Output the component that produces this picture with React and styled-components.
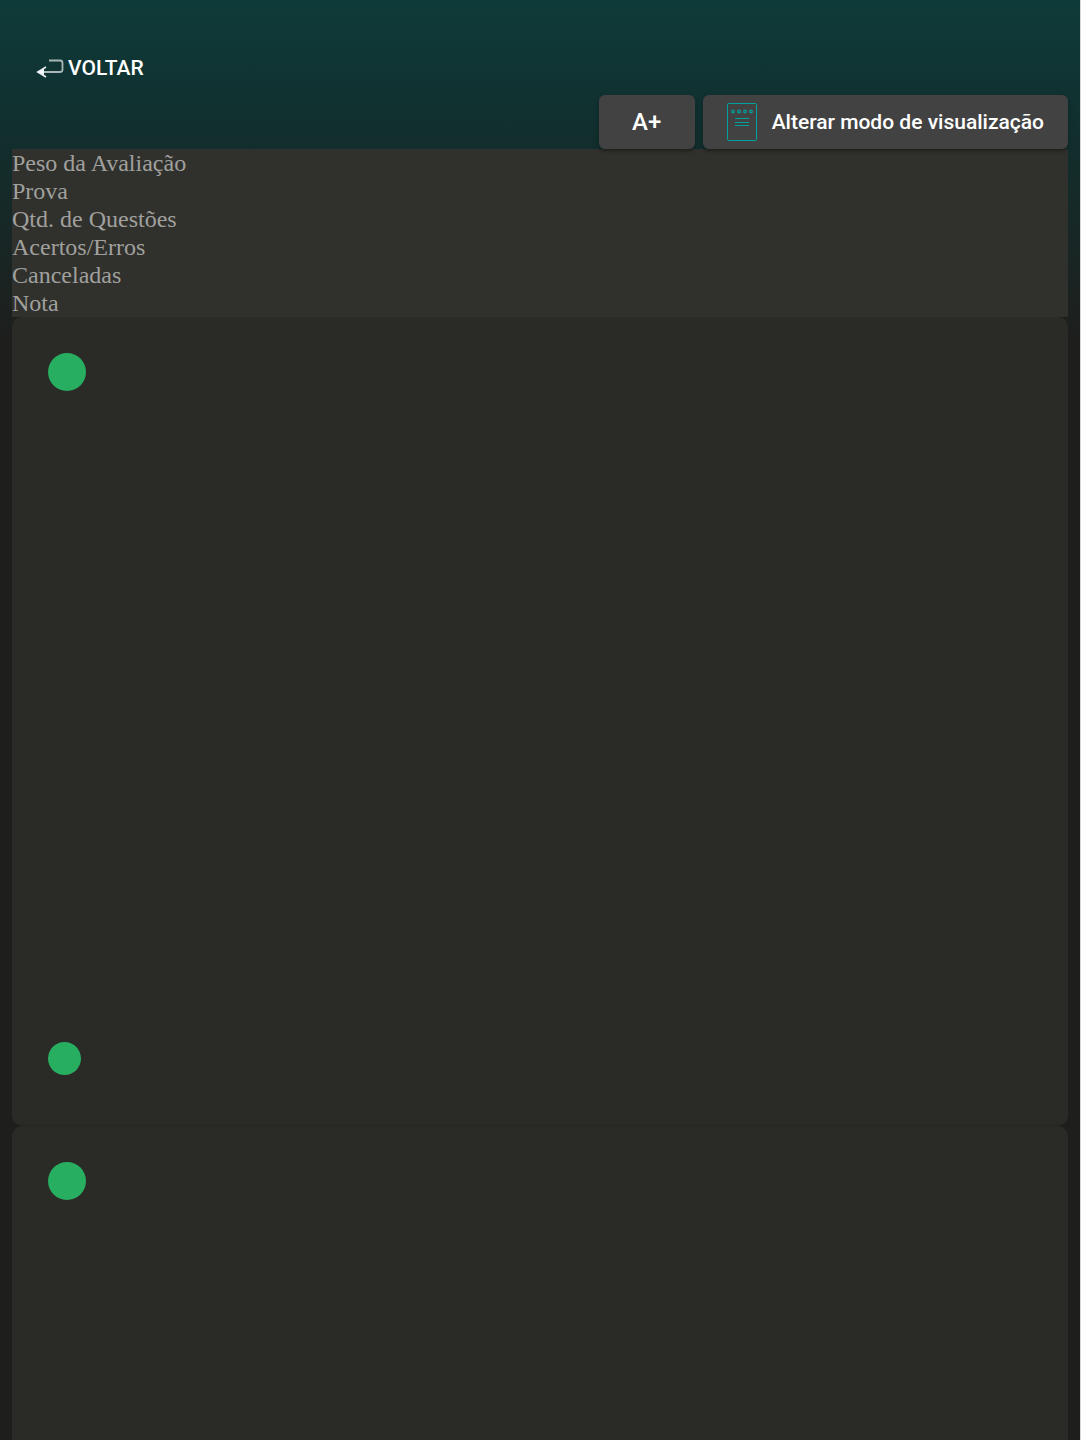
import React from "react";
import styled, { createGlobalStyle } from "styled-components";

const summaryFields = [
  "Peso da Avaliação",
  "Prova",
  "Qtd. de Questões",
  "Acertos/Erros",
  "Canceladas",
  "Nota",
];

const BackIcon = () => (
  <svg width="28" height="20" viewBox="0 0 28 20" fill="none" aria-hidden="true">
    <path d="M13 2.5H24Q26.5 2.5 26.5 5V11.5Q26.5 14 24 14H4" stroke="#a9b8b7" strokeWidth="1.8" />
    <path d="M10 9L2 14L10 19" stroke="#e4eaea" strokeWidth="1.8" />
    <path d="M1 14L8 11V17Z" fill="#f4f7f7" />
  </svg>
);

const NotepadIcon = () => (
  <svg width="30" height="38" viewBox="0 0 30 38" fill="none" stroke="#00a09d" aria-hidden="true">
    <rect x="0.5" y="0.5" width="29" height="37" rx="1" />
    {[6, 12, 18, 24].map((x) => (
      <circle key={x} cx={x} cy="8.5" r="1.3" strokeWidth="1.2" />
    ))}
    <path d="M8 15.5H22M8 19.5H22M8 22.5H22" />
  </svg>
);

const Question = ({ last = false }) => (
  <QuestionCard $last={last}>
    <Dot $size={38} />
    {!last && (
      <>
        <QuestionBody />
        <Dot $size={33} />
      </>
    )}
  </QuestionCard>
);

const App = () => {
  const [largeText, setLargeText] = React.useState(false);
  const [single, setSingle] = React.useState(false);

  return (
    <Page>
      <GlobalStyle />
      <Header>
        <BackLink href="#voltar">
          <BackIcon />
          VOLTAR
        </BackLink>
      </Header>
      <Toolbar>
        <ZoomButton type="button" onClick={() => setLargeText(!largeText)}>
          A+
        </ZoomButton>
        <ModeButton type="button" onClick={() => setSingle(!single)}>
          <NotepadIcon />
          Alterar modo de visualização
        </ModeButton>
      </Toolbar>
      <Summary $large={largeText}>
        {summaryFields.map((field) => (
          <li key={field}>{field}</li>
        ))}
      </Summary>
      {!single && <Question />}
      <Question last />
    </Page>
  );
};

const GlobalStyle = createGlobalStyle`
  * {
    box-sizing: border-box;
  }

  body {
    margin: 0;
    background: #1e1e1c;
  }
`;

const Page = styled.main`
  display: flex;
  flex-direction: column;
  min-height: 100vh;
  padding: 0 12px;
  border-right: 1px solid #d5d8d6;
  background: #1e1e1c linear-gradient(#0e3b39, #112f2e 130px, #1e1e1c 350px) no-repeat;
`;

const Header = styled.header`
  display: flex;
  padding: 55px 24px 14px;
`;

const BackLink = styled.a`
  display: flex;
  align-items: center;
  gap: 4px;
  color: #fff;
  font: 500 21px/26px Roboto, sans-serif;
  text-decoration: none;
`;

/* positioned so the button shadows fall over the summary */
const Toolbar = styled.div`
  position: relative;
  display: flex;
  justify-content: flex-end;
  gap: 8px;
`;

const Button = styled.button`
  display: flex;
  align-items: center;
  justify-content: center;
  height: 54px;
  border: 0;
  border-radius: 6px;
  background: #424242;
  color: #fff;
  cursor: pointer;
  box-shadow: 0 4px 2px -3px rgba(0, 0, 0, 0.2), 0 3px 3px rgba(0, 0, 0, 0.14),
    0 1px 7px rgba(0, 0, 0, 0.12);
`;

const ZoomButton = styled(Button)`
  min-width: 96px;
  font: 500 24px/54px Roboto, sans-serif;
`;

const ModeButton = styled(Button)`
  gap: 15px;
  padding: 0 24px;
  font: 500 21px/54px Roboto, sans-serif;
`;

const Summary = styled.ul`
  margin: 0;
  padding: 0;
  list-style: none;
  background: #30302c;
  color: #a0a09e;
  font-family: "Liberation Serif", serif;
  font-size: ${({ $large }) => ($large ? 28 : 24)}px;
  line-height: 28px;
`;

const QuestionCard = styled.section`
  display: flex;
  flex-direction: column;
  flex: ${({ $last }) => ($last ? "1 0 auto" : "none")};
  padding: ${({ $last }) => ($last ? "36px 36px 0" : "36px 36px 50px")};
  border-bottom: ${({ $last }) => ($last ? "0" : "1px solid #262623")};
  border-radius: ${({ $last }) => ($last ? "10px 10px 0 0" : "10px")};
  background: #2a2a26;
`;

const QuestionBody = styled.div`
  min-height: 651px;
`;

const Dot = styled.span`
  width: ${({ $size }) => $size}px;
  height: ${({ $size }) => $size}px;
  border-radius: 50%;
  background: #27ae60;
`;

export default App;
